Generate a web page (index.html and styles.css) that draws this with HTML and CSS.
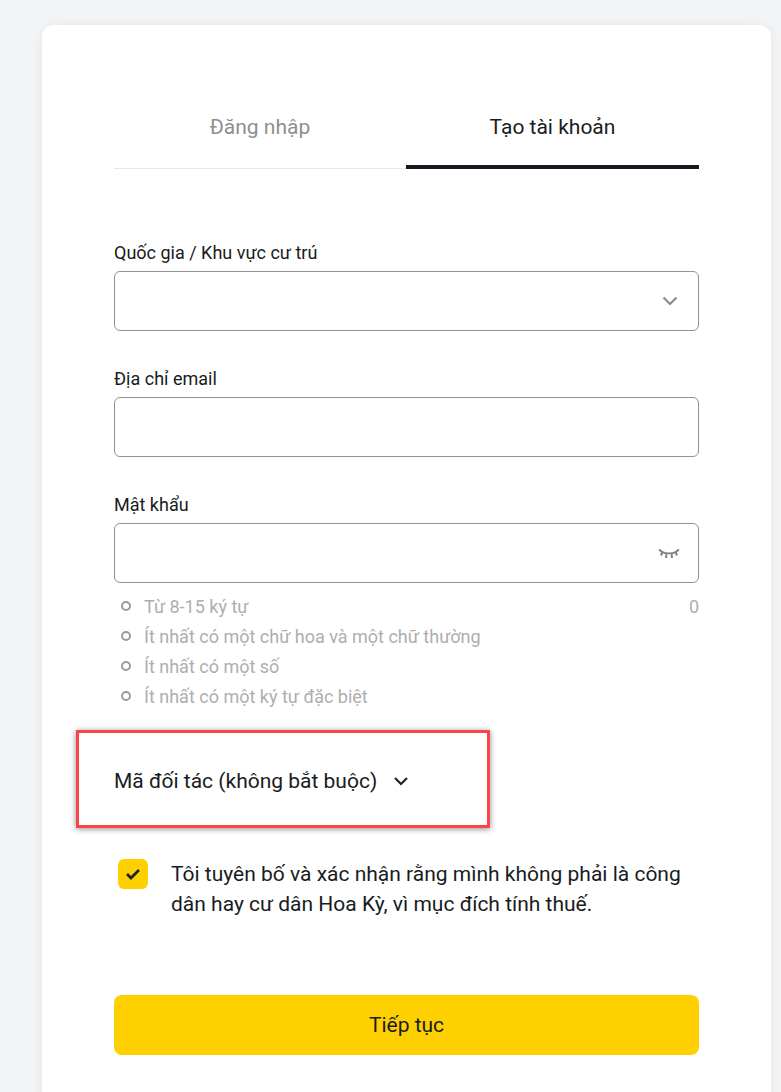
FILE: index.html
```html
<!DOCTYPE html>
<html lang="vi">
<head>
<meta charset="utf-8">
<title>Tạo tài khoản</title>
<link rel="stylesheet" href="styles.css">
</head>
<body>
<main class="card">
  <div class="tabs">
    <div class="tab">Đăng nhập</div>
    <div class="tab tab-active">Tạo tài khoản</div>
  </div>
  <form class="form">
    <div class="field">
      <div class="label">Quốc gia / Khu vực cư trú</div>
      <div class="input">
        <svg class="icon" width="16" height="10" viewBox="0 0 16 10"><path d="M1.500 1.500 8 8l6.500-6.500" fill="none" stroke="#8a8c8f" stroke-width="2.200"/></svg>
      </div>
    </div>
    <div class="field">
      <div class="label">Địa chỉ email</div>
      <div class="input"></div>
    </div>
    <div class="field">
      <div class="label">Mật khẩu</div>
      <div class="input input-eye">
        <svg class="icon eye" width="22" height="12" viewBox="0 0 22 12"><path d="M1 1.500 4 3.800C8 5.800 14 5.800 18 3.800L21 1.500M4.500 4 3 7.500M8.500 5.200 8 10M13.500 5.200 14 10M17.500 4 19 7.500" fill="none" stroke="#808285" stroke-width="2"/></svg>
      </div>
    </div>
    <ul class="hints">
      <li class="hint"><span class="dot"></span><span class="hint-text">Từ 8-15 ký tự</span><span class="count">0</span></li>
      <li class="hint"><span class="dot"></span><span class="hint-text">Ít nhất có một chữ hoa và một chữ thường</span></li>
      <li class="hint"><span class="dot"></span><span class="hint-text">Ít nhất có một số</span></li>
      <li class="hint"><span class="dot"></span><span class="hint-text">Ít nhất có một ký tự đặc biệt</span></li>
    </ul>
    <div class="partner">
      <span>Mã đối tác (không bắt buộc)</span>
      <svg width="16" height="10" viewBox="0 0 16 10"><path d="M2 2l6 6 6-6" fill="none" stroke="#1e2329" stroke-width="2.200"/></svg>
    </div>
    <div class="consent">
      <span class="checkbox">
        <svg width="16" height="12" viewBox="0 0 16 12"><path d="M2 6l4 4 8-8" fill="none" stroke="#1e2329" stroke-width="2.800"/></svg>
      </span>
      <p class="consent-text">Tôi tuyên bố và xác nhận rằng mình không phải là công dân hay cư dân Hoa Kỳ, vì mục đích tính thuế.</p>
    </div>
    <div class="submit">Tiếp tục</div>
  </form>
</main>
<div class="highlight"></div>
</body>
</html>
```
FILE: styles.css
```css
* { box-sizing: border-box; }
html, body { margin: 0; height: 1092px; overflow: hidden; }
body {
  background: #f3f4f6;
  font-family: Roboto, "Liberation Sans", sans-serif;
  color: #181c22;
  position: relative;
}
.card {
  width: 729px;
  height: 1100px;
  margin: 25px 0 0 42px;
  padding: 72px 72px 0;
  background: #fff;
  border-radius: 12px;
  box-shadow: 0 0 12px rgba(30, 35, 41, 0.06);
}
.tabs { display: flex; border-bottom: 1px solid #e6e8ea; }
.tab {
  flex: 1;
  height: 72px;
  margin-bottom: -1px;
  padding-top: 17px;
  text-align: center;
  font-size: 21px;
  line-height: 26px;
  color: #8c8f92;
}
.tab-active { flex: 0 0 293px; color: #181c22; border-bottom: 4px solid #14181f; }
.form { display: flex; flex-direction: column; padding-top: 72px; }
.field { display: flex; flex-direction: column; margin-bottom: 36px; }
.field:nth-child(3) { margin-bottom: 8px; }
.label { font-size: 18px; line-height: 24px; height: 30px; }
.input {
  height: 60px;
  border: 1px solid #8f9194;
  border-radius: 6px;
  display: flex;
  align-items: center;
  justify-content: flex-end;
  padding-right: 20px;
}
.input-eye { padding-right: 18px; }
.eye { margin-top: 2px; }
.hints { list-style: none; margin: 0; padding: 0; }
.hint { display: flex; align-items: center; height: 30px; color: #adaeb0; font-size: 18px; }
.dot { width: 10px; height: 10px; border: 2px solid #9a9b9d; border-radius: 50%; margin: 0 13px 0 7px; }
.hint-text { flex: 1; }
.partner {
  display: flex;
  align-items: center;
  gap: 16px;
  height: 60px;
  margin-top: 40px;
  font-size: 21px;
}
.consent { display: flex; gap: 23px; margin-top: 48px; padding-left: 4px; }
.checkbox {
  flex: none;
  width: 30px;
  height: 30px;
  border-radius: 6px;
  background: #ffd000;
  display: flex;
  align-items: center;
  justify-content: center;
}
.consent-text { margin: 0; font-size: 21px; line-height: 30px; width: 528px; }
.submit {
  height: 60px;
  margin-top: 76px;
  background: #ffd000;
  border-radius: 8px;
  display: flex;
  align-items: center;
  justify-content: center;
  font-size: 21px;
}
.highlight {
  position: absolute;
  left: 76px;
  top: 730px;
  width: 414px;
  height: 98px;
  border: 3px solid #f94449;
  box-shadow: 0 1px 6px rgba(0, 0, 0, 0.45);
}
```
